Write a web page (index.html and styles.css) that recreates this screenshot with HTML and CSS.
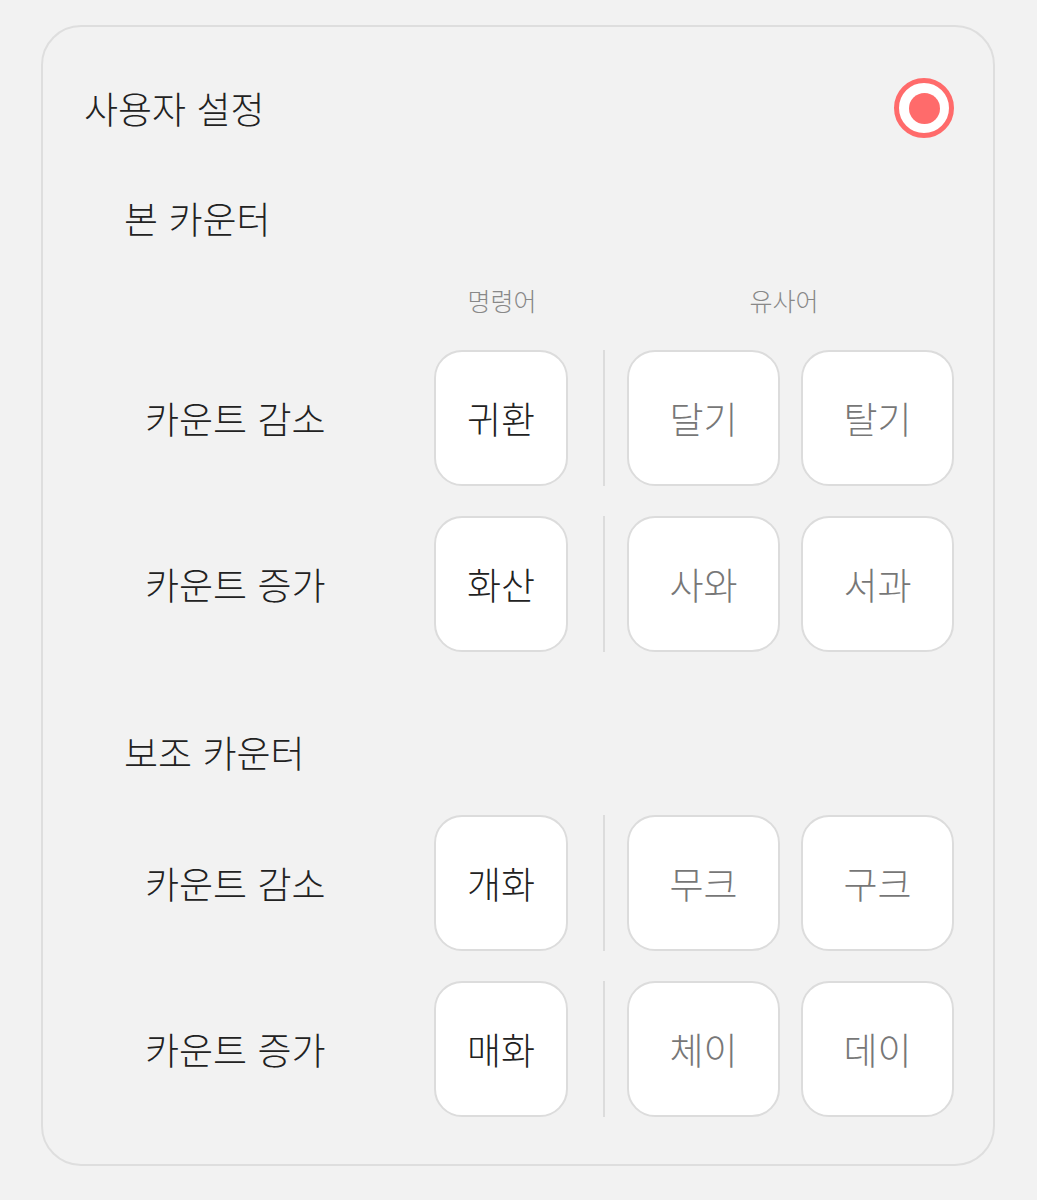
FILE: index.html
```html
<!DOCTYPE html>
<html lang="ko">
<head>
  <meta charset="UTF-8">
  <meta name="viewport" content="width=device-width, initial-scale=1.0">
  <title>사용자 설정</title>
  <link rel="stylesheet" href="styles.css">
</head>
<body>
  <div class="settings">
    <header class="settings-head">
      <h1>사용자 설정</h1>
      <span class="rec-btn"><span class="rec-dot"></span></span>
    </header>

    <section class="counter">
      <h2>본 카운터</h2>
      <div class="col-heads">
        <span class="col-cmd">명령어</span>
        <span class="col-alias">유사어</span>
      </div>
      <div class="word-row">
        <span class="row-label">카운트 감소</span>
        <div class="word cmd">귀환</div>
        <span class="divider"></span>
        <div class="word alias">달기</div>
        <div class="word alias">탈기</div>
      </div>
      <div class="word-row">
        <span class="row-label">카운트 증가</span>
        <div class="word cmd">화산</div>
        <span class="divider"></span>
        <div class="word alias">사와</div>
        <div class="word alias">서과</div>
      </div>
    </section>

    <section class="counter sub">
      <h2>보조 카운터</h2>
      <div class="word-row">
        <span class="row-label">카운트 감소</span>
        <div class="word cmd">개화</div>
        <span class="divider"></span>
        <div class="word alias">무크</div>
        <div class="word alias">구크</div>
      </div>
      <div class="word-row">
        <span class="row-label">카운트 증가</span>
        <div class="word cmd">매화</div>
        <span class="divider"></span>
        <div class="word alias">체이</div>
        <div class="word alias">데이</div>
      </div>
    </section>
  </div>
</body>
</html>
```

FILE: styles.css
```css
body {
  margin: 0;
  background-color: #f2f2f2;
  color: #222;
  font-family: "Noto Sans CJK KR", "Noto Sans", sans-serif;
  font-weight: 300;
}

.settings {
  margin: 25px 0 0 41px;
  width: 954px;
  height: 1141px;
  box-sizing: border-box;
  border: 2px solid #dedede;
  border-radius: 40px;
  padding: 51px 39px 0 41px;
}

/* title + record button */
.settings-head {
  display: flex;
  justify-content: space-between;
  align-items: center;
  height: 60px;
}

.settings-head h1 {
  margin: 0;
  font-size: 37px;
  font-weight: 300;
  line-height: 48px;
}

.rec-btn {
  width: 60px;
  height: 60px;
  border-radius: 50%;
  background: #fff;
  border: 5px solid #ff6b6b;
  box-sizing: border-box;
  display: flex;
  align-items: center;
  justify-content: center;
}

.rec-dot {
  width: 31px;
  height: 31px;
  border-radius: 50%;
  background: #ff6b6b;
}

.counter h2 {
  margin: 56px 0 0 40px;
  font-size: 37px;
  font-weight: 300;
  line-height: 48px;
}

.counter.sub h2 {
  margin-top: 76px;
  margin-bottom: 39px;
}

.col-heads {
  display: flex;
  margin-top: 42px;
  margin-bottom: 34px;
  padding-left: 349px;
  font-size: 25px;
  line-height: 32px;
  color: #888;
}

.col-cmd {
  width: 138px;
  text-align: center;
}

.col-alias {
  margin-left: 55px;
  width: 316px;
  text-align: center;
}

/* one row: label, command word, divider, two aliases */
.word-row {
  display: flex;
  align-items: stretch;
  height: 136px;
  margin-bottom: 30px;
}

.row-label {
  flex: 1;
  align-self: center;
  padding-left: 61px;
  font-size: 37px;
  line-height: 48px;
}

.word {
  box-sizing: border-box;
  background: #fff;
  border: 2px solid #dcdcdc;
  border-radius: 28px;
  display: flex;
  align-items: center;
  justify-content: center;
  font-size: 37px;
}

.word.cmd {
  width: 134px;
  color: #222;
}

.word.alias {
  width: 153px;
  color: #777;
}

.word.alias + .word.alias {
  margin-left: 21px;
}

.divider {
  width: 2px;
  margin: 0 22px 0 35px;
  background: #dcdcdc;
}
```
